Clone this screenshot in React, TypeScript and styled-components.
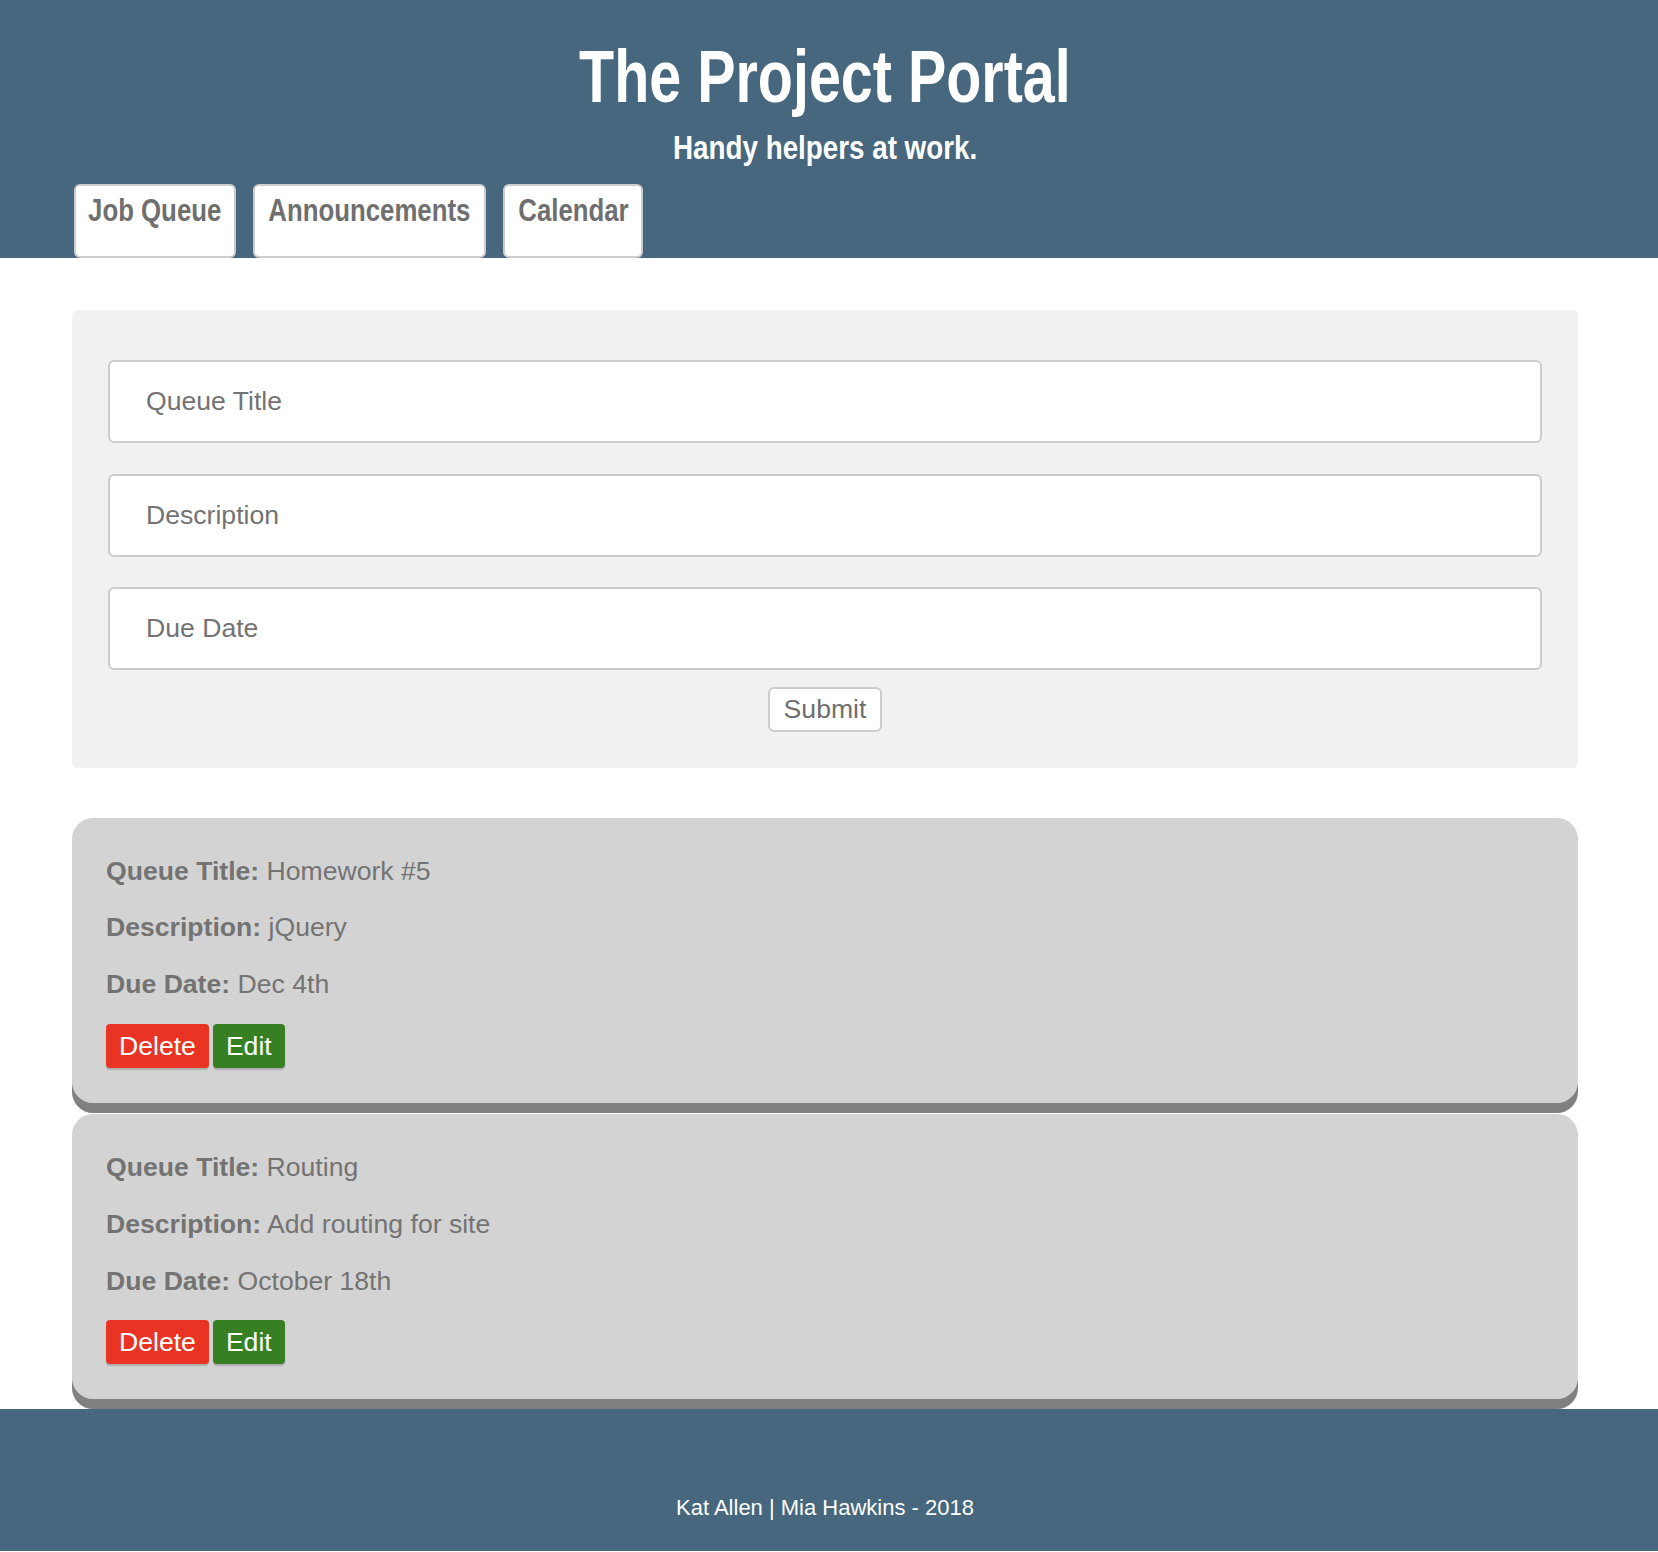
import React from "react";
import styled, { createGlobalStyle } from "styled-components";

const GlobalStyle = createGlobalStyle`
  html, body { margin: 0; padding: 0; background: #ffffff; }
  body { font-family: "Liberation Sans", Arial, sans-serif; }
  * { box-sizing: border-box; }
`;

const Page = styled.div`
  display: flex;
  flex-direction: column;
  min-height: 1552px;
`;

const Header = styled.header`
  background: #46677d;
  height: 258px;
  padding: 39px 82px 0 74px;
  display: flex;
  flex-direction: column;
`;

const Condensed = styled.span<{ $k: number }>`
  display: inline-block;
  white-space: nowrap;
  transform: scaleX(${(p) => p.$k});
  transform-origin: center;
`;

const Title = styled.h1`
  margin: 0;
  height: 75px;
  font-size: 75px;
  line-height: 75px;
  font-weight: 700;
  color: #ffffff;
  display: flex;
  justify-content: center;
`;

const Subtitle = styled.h2`
  margin: 16px 0 0;
  height: 34px;
  font-size: 34px;
  line-height: 34px;
  font-weight: 700;
  color: #ffffff;
  display: flex;
  justify-content: center;
`;

const Tabs = styled.nav`
  margin-top: 19.5px;
  display: flex;
  gap: 17px;
`;

const Tab = styled.a<{ $w: number }>`
  width: ${(p) => p.$w}px;
  height: 74px;
  background: #ffffff;
  border: 2px solid #cccccc;
  border-radius: 6px;
  padding-top: 8.2px;
  display: flex;
  justify-content: center;
  align-items: flex-start;
  font-size: 32px;
  line-height: 32px;
  font-weight: 700;
  color: #6f6f6f;
  text-decoration: none;
`;

const Main = styled.main`
  margin: 52px 80px 0 72px;
  display: flex;
  flex-direction: column;
`;

const FormPanel = styled.form`
  background: #f1f1f1;
  border-radius: 6px;
  padding: 50px 36px 36px;
  display: flex;
  flex-direction: column;
  align-items: center;
`;

const Fields = styled.div`
  width: 100%;
  display: flex;
  flex-direction: column;
  gap: 30.5px;
`;

const Input = styled.input`
  width: 100%;
  height: 83px;
  border: 2px solid #cccccc;
  border-radius: 6px;
  background: #ffffff;
  padding: 0 36px;
  font-family: "Liberation Sans", Arial, sans-serif;
  font-size: 26.6px;
  color: #6f6f6f;
  outline: none;
  &::placeholder { color: #737373; }
`;

const SubmitButton = styled.button`
  margin-top: 17px;
  width: 114px;
  height: 45px;
  background: #ffffff;
  border: 2px solid #cccccc;
  border-radius: 6px;
  font-family: "Liberation Sans", Arial, sans-serif;
  font-size: 26.6px;
  color: #6f6f6f;
  padding: 0;
  cursor: pointer;
`;

const CardList = styled.section`
  margin-top: 50px;
  display: flex;
  flex-direction: column;
  gap: 11px;
  padding-bottom: 10px;
`;

const Card = styled.article`
  background: #d3d3d3;
  border-radius: 21px;
  box-shadow: 0 10px 0 #808080;
  padding: 37.5px 34px 35px;
  display: flex;
  flex-direction: column;
`;

const CardLines = styled.div`
  display: flex;
  flex-direction: column;
  gap: 26.4px;
`;

const Line = styled.p`
  margin: 0;
  font-size: 26.6px;
  line-height: 30.6px;
  color: #737373;
  white-space: nowrap;
`;

const Label = styled.strong`
  font-weight: 700;
`;

const ButtonRow = styled.div`
  margin-top: 24px;
  display: flex;
  gap: 4px;
`;

const ActionButton = styled.button<{ $tone: "danger" | "ok" }>`
  height: 44px;
  padding: 0 13px;
  border: none;
  border-radius: 4px;
  background: ${(p) => (p.$tone === "danger" ? "#e93424" : "#367f23")};
  color: #ffffff;
  font-family: "Liberation Sans", Arial, sans-serif;
  font-size: 26.6px;
  box-shadow: 0 2px 1px rgba(0, 0, 0, 0.18);
  cursor: pointer;
`;

const Footer = styled.footer`
  background: #46677d;
  height: 142px;
  padding: 86px 8px 0 0;
  text-align: center;
  color: #ffffff;
  font-size: 22px;
  line-height: normal;
`;

const tabs = [
  { label: "Job Queue", w: 162 },
  { label: "Announcements", w: 233 },
  { label: "Calendar", w: 140 },
];

const jobs = [
  { title: "Homework #5", description: "jQuery", due: "Dec 4th" },
  { title: "Routing", description: "Add routing for site", due: "October 18th" },
];

export default function App() {
  return (
    <Page>
      <GlobalStyle />
      <Header>
        <Title>
          <Condensed $k={0.766}>The Project Portal</Condensed>
        </Title>
        <Subtitle>
          <Condensed $k={0.817}>Handy helpers at work.</Condensed>
        </Subtitle>
        <Tabs>
          {tabs.map((t) => (
            <Tab key={t.label} href="#" $w={t.w}>
              <Condensed $k={0.806}>{t.label}</Condensed>
            </Tab>
          ))}
        </Tabs>
      </Header>
      <Main>
        <FormPanel onSubmit={(e) => e.preventDefault()}>
          <Fields>
            <Input placeholder="Queue Title" />
            <Input placeholder="Description" />
            <Input placeholder="Due Date" />
          </Fields>
          <SubmitButton type="submit">Submit</SubmitButton>
        </FormPanel>
        <CardList>
          {jobs.map((j) => (
            <Card key={j.title}>
              <CardLines>
                <Line>
                  <Label>Queue Title:</Label> {j.title}
                </Line>
                <Line>
                  <Label>Description:</Label> {j.description}
                </Line>
                <Line>
                  <Label>Due Date:</Label> {j.due}
                </Line>
              </CardLines>
              <ButtonRow>
                <ActionButton $tone="danger">Delete</ActionButton>
                <ActionButton $tone="ok">Edit</ActionButton>
              </ButtonRow>
            </Card>
          ))}
        </CardList>
      </Main>
      <Footer>Kat Allen | Mia Hawkins - 2018</Footer>
    </Page>
  );
}
